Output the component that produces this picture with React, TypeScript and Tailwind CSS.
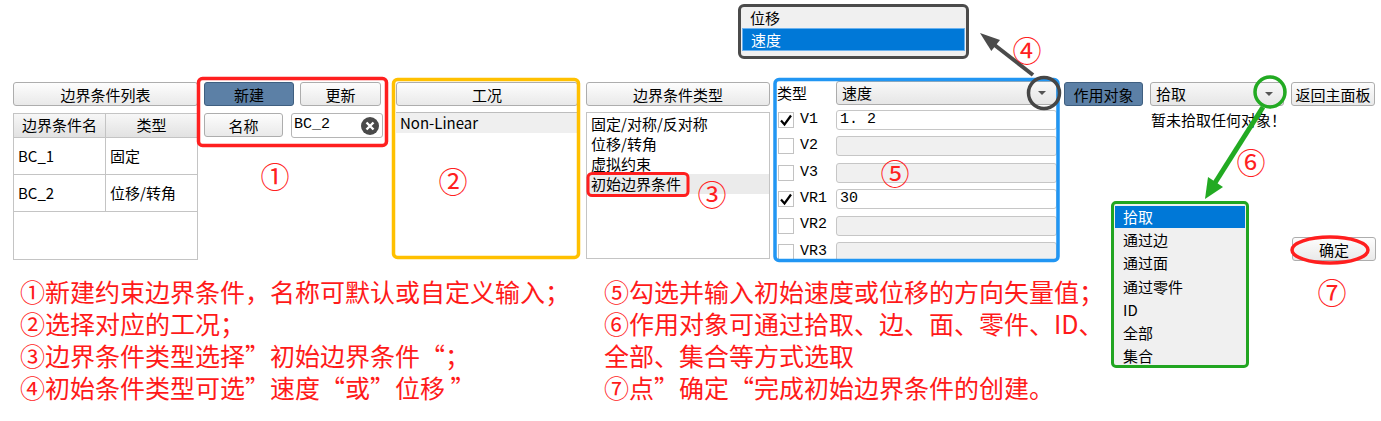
import React from "react";

const btn =
  "h-[24px] flex items-center justify-center rounded-[3px] border text-[15px] text-black leading-none";
const gray = "border-[#adadad] bg-linear-to-b from-[#fdfdfd] to-[#e9e9e9]";
const blue = "border-[#3f5f80] bg-[#5c80a6]";
const mono = "font-['Liberation_Mono','Noto_Sans_CJK_SC',monospace]";

function Arrow() {
  return (
    <svg width="10" height="6" viewBox="0 0 10 6">
      <path d="M1 1 L9 1 L5 5 Z" fill="#555" />
    </svg>
  );
}

function Combo({ value, className }: { value: string; className: string }) {
  return (
    <div
      className={`h-[24px] flex items-center justify-between rounded-[3px] border border-[#acacac] bg-linear-to-b from-[#f8f8f8] to-[#e6e6e6] pl-[5px] pr-[9px] text-[15px] ${className}`}
    >
      <span>{value}</span>
      <Arrow />
    </div>
  );
}

function CheckBox({ on }: { on: boolean }) {
  return (
    <div className="w-[16px] h-[16px] border border-[#c2c2c2] bg-white flex items-center justify-center">
      {on && (
        <svg width="14" height="14" viewBox="0 0 14 14">
          <path d="M2 7.5 L5.5 11.5 L12 2.5" stroke="#000" strokeWidth="2.2" fill="none" />
        </svg>
      )}
    </div>
  );
}

const vrows = [
  { k: "V1", on: true, v: "1. 2" },
  { k: "V2", on: false, v: "" },
  { k: "V3", on: false, v: "" },
  { k: "VR1", on: true, v: "30" },
  { k: "VR2", on: false, v: "" },
  { k: "VR3", on: false, v: "" },
];

const bcTypes = ["固定/对称/反对称", "位移/转角", "虚拟约束", "初始边界条件"];
const pickItems = ["通过边", "通过面", "通过零件", "ID", "全部", "集合"];

function Num({ n, x, y }: { n: string; x: string; y: string }) {
  return (
    <span
      className={`absolute ${x} ${y} -translate-x-1/2 -translate-y-1/2 text-[29px] leading-none text-[#ff2020]`}
    >
      {n}
    </span>
  );
}

export default function App() {
  return (
    <div className="relative w-[1381px] h-[421px] bg-white overflow-hidden text-black font-['Noto_Sans_CJK_SC',sans-serif]">
      {/* panels */}
      <div className="flex items-start h-[260px] pt-[82px] pl-[13px]">
        {/* list */}
        <div className="w-[185px]">
          <div className={`${btn} ${gray}`}>边界条件列表</div>
          <div className="mt-[7px] h-[147px] border border-[#c4c4c4] text-[15px]">
            <div className="flex h-[24px] border-b border-[#c4c4c4] bg-linear-to-b from-[#f7f7f7] to-[#e2e2e2]">
              <div className="w-[92px] border-r border-[#c4c4c4] flex items-center justify-center">
                边界条件名
              </div>
              <div className="flex-1 flex items-center justify-center">类型</div>
            </div>
            {[
              ["BC_1", "固定"],
              ["BC_2", "位移/转角"],
            ].map(([a, b]) => (
              <div key={a} className="flex h-[37px] border-b border-[#c4c4c4]">
                <div className="w-[92px] border-r border-[#c4c4c4] flex items-center pl-[4px]">
                  {a}
                </div>
                <div className="flex-1 flex items-center pl-[4px]">{b}</div>
              </div>
            ))}
          </div>
        </div>

        {/* new / update */}
        <div className="ml-[6px] w-[179px]">
          <div className="flex gap-[6px]">
            <div className={`${btn} ${blue} w-[90px]`}>新建</div>
            <div className={`${btn} ${gray} w-[81px]`}>更新</div>
          </div>
          <div className="flex gap-[8px] mt-[7px]">
            <div className={`${btn} ${gray} w-[79px]`}>名称</div>
            <div className="w-[92px] h-[25px] flex items-center justify-between rounded-[3px] border border-[#b5b5b5] bg-white pl-[2px] pr-[3px]">
              <span className={`${mono} text-[15px]`}>BC_2</span>
              <svg width="18" height="18" viewBox="0 0 18 18">
                <circle cx="9" cy="9" r="9" fill="#4a4a4a" />
                <path d="M5.5 5.5 L12.5 12.5 M12.5 5.5 L5.5 12.5" stroke="#fff" strokeWidth="2.4" />
              </svg>
            </div>
          </div>
        </div>

        {/* load case */}
        <div className="ml-[13px] w-[182px]">
          <div className={`${btn} ${gray}`}>工况</div>
          <div className="mt-[6px] border-t border-[#bdbdbd]">
            <div className="h-[20px] bg-[#efefef] pl-[4px] text-[15px] leading-[20px]">Non-Linear</div>
          </div>
        </div>

        {/* bc type */}
        <div className="ml-[8px] w-[184px]">
          <div className={`${btn} ${gray}`}>边界条件类型</div>
          <div className="mt-[6px] h-[147px] border border-[#c4c4c4] pt-[1px] text-[15px]">
            {bcTypes.map((t, i) => (
              <div
                key={t}
                className={`h-[20px] leading-[20px] pl-[4px] ${i === 3 ? "bg-[#ebebeb]" : ""}`}
              >
                {t}
              </div>
            ))}
          </div>
        </div>

        {/* values */}
        <div className="ml-[7px] w-[280px] -mt-[1px]">
          <div className="flex items-center">
            <span className="w-[59px] text-[15px]">类型</span>
            <Combo value="速度" className="flex-1" />
          </div>
          <div className="flex flex-col gap-[6.4px] mt-[5px]">
            {vrows.map((r) => (
              <div key={r.k} className="flex items-center h-[20px]">
                <div className="ml-[1px]">
                  <CheckBox on={r.on} />
                </div>
                <span className={`${mono} ml-[6px] w-[36px] text-[15px]`}>{r.k}</span>
                <div
                  className={`flex-1 h-[20px] rounded-[3px] border border-[#c6c6c6] pl-[3px] flex items-center ${mono} text-[15px] ${
                    r.on ? "bg-white" : "bg-[#f0f0f0]"
                  }`}
                >
                  {r.v}
                </div>
              </div>
            ))}
          </div>
        </div>

        {/* target */}
        <div className="ml-[7px] w-[311px] flex flex-col">
          <div className="flex gap-[7px]">
            <div className={`${btn} ${blue} w-[79px]`}>作用对象</div>
            <Combo value="拾取" className="w-[134px]" />
            <div className={`${btn} ${gray} w-[84px]`}>返回主面板</div>
          </div>
          <div className="pl-[87px] mt-[2px] text-[15px] leading-[24px]">暂未拾取任何对象！</div>
          <div className={`${btn} ${gray} w-[84px] self-end mt-[105px] mr-[-1px]`}>确定</div>
        </div>
      </div>

      {/* notes */}
      <div className="flex pt-[15px] text-[25px] leading-[32px] text-[#ff1a1a]">
        <div className="w-[604px] pl-[20px]">
          <div>①新建约束边界条件，名称可默认或自定义输入；</div>
          <div>②选择对应的工况；</div>
          <div>③边界条件类型选择”初始边界条件“；</div>
          <div>④初始条件类型可选”速度“或”位移 ”</div>
        </div>
        <div>
          <div>⑤勾选并输入初始速度或位移的方向矢量值；</div>
          <div>⑥作用对象可通过拾取、边、面、零件、ID、</div>
          <div>全部、集合等方式选取</div>
          <div>⑦点”确定“完成初始边界条件的创建。</div>
        </div>
      </div>

      {/* open dropdowns */}
      <div className="absolute left-[738px] top-[4px] w-[231px] h-[55px] border-[3px] border-[#4b4b4b] rounded-[6px] bg-[#f0f0f0] pt-[1px] px-[1px] text-[15px]">
        <div className="h-[20px] leading-[20px] pl-[8px]">位移</div>
        <div className="h-[23px] leading-[21px] pl-[8px] bg-[#0078d7] border border-[#6ab2f0] text-white">
          速度
        </div>
      </div>

      <div className="absolute left-[1111px] top-[201px] w-[138px] h-[167px] border-[3px] border-[#21a521] rounded-[5px] bg-[#f0f0f0] pt-[2px] px-[1px] text-[15px]">
        <div className="h-[22px] leading-[22px] pl-[8px] bg-[#0078d7] text-white">拾取</div>
        {pickItems.map((p) => (
          <div key={p} className="h-[23.3px] leading-[23.3px] pl-[8px]">
            {p}
          </div>
        ))}
      </div>

      {/* annotations */}
      <svg className="absolute left-0 top-0 pointer-events-none" width="1381" height="421">
        <rect x="198.5" y="78.5" width="188" height="67" rx="4" fill="none" stroke="#ff1f1f" strokeWidth="3.5" />
        <rect x="393.5" y="79.5" width="185" height="178" rx="4" fill="none" stroke="#ffc000" strokeWidth="3.5" />
        <rect x="775" y="79.5" width="283" height="181" rx="4" fill="none" stroke="#2196f3" strokeWidth="3.5" />
        <rect x="588" y="173.5" width="100" height="22" rx="4" fill="none" stroke="#ff1f1f" strokeWidth="3" />
        <circle cx="1044" cy="93" r="15.5" fill="none" stroke="#464646" strokeWidth="3.5" />
        <circle cx="1270" cy="92" r="15" fill="none" stroke="#22aa22" strokeWidth="3.5" />
        <ellipse cx="1330" cy="250" rx="38" ry="13" fill="none" stroke="#ff1f1f" strokeWidth="3.5" />
        <line x1="1033" y1="75" x2="992" y2="43" stroke="#4b4b4b" strokeWidth="4" />
        <polygon points="980,33 991.3,50.9 1000,39.9" fill="#4b4b4b" />
        <line x1="1263" y1="107" x2="1213" y2="186" stroke="#22aa22" strokeWidth="5" />
        <polygon points="1205,199 1223,187 1208,177" fill="#22aa22" />
      </svg>

      <Num n="①" x="left-[275px]" y="top-[175px]" />
      <Num n="②" x="left-[453px]" y="top-[180px]" />
      <Num n="③" x="left-[712px]" y="top-[193px]" />
      <Num n="④" x="left-[1027px]" y="top-[49px]" />
      <Num n="⑤" x="left-[895px]" y="top-[172px]" />
      <Num n="⑥" x="left-[1251px]" y="top-[161px]" />
      <Num n="⑦" x="left-[1332px]" y="top-[291px]" />
    </div>
  );
}
